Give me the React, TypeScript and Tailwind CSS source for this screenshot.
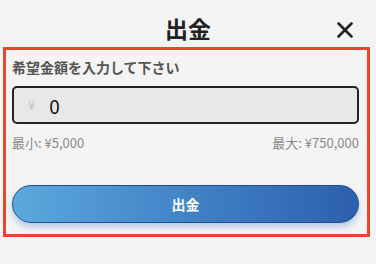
export default function App() {
  return (
    <main className="h-[264px] w-[376px] overflow-hidden bg-[#f4f4f4] font-['Noto_Sans_CJK_JP','Noto_Sans',sans-serif] text-[#222]">
      <header className="relative flex h-[47px] items-center justify-center pt-[9px]">
        <h1 className="text-[23px] font-bold leading-none">出金</h1>
        <button className="absolute right-[23px] top-[22px] text-[#222]">
          <svg width="16" height="16" viewBox="0 0 16 16" fill="none">
            <path d="M1.5 1.5L14.5 14.5M14.5 1.5L1.5 14.5" stroke="currentColor" strokeWidth="2.6" strokeLinecap="round" />
          </svg>
        </button>
      </header>

      <section className="ml-[3px] w-[367px] border-[3px] border-[#e8452f] pb-[11px] pl-[6px] pr-[8px] pt-[7px]">
        <p className="text-[14px] font-bold leading-[20px] text-[#555]">希望金額を入力して下さい</p>

        <div className="mt-[9px] flex h-[38px] items-center rounded-[5px] border-2 border-[#222] bg-[#e8e8e8] pl-[14px]">
          <span className="text-[13px] text-[#c4c4c4]">¥</span>
          <span className="ml-[14px] text-[19px] leading-none text-[#111]">0</span>
        </div>

        <div className="mt-[10px] flex justify-between text-[13px] leading-[18px] text-[#8a8a8a]">
          <span>最小: ¥5,000</span>
          <span>最大: ¥750,000</span>
        </div>

        <button className="mt-[33px] flex h-[38px] w-full items-center justify-center rounded-full border-[1.5px] border-[#234f8c] bg-gradient-to-r from-[#5ca8de] to-[#2c5fae] text-[14px] font-bold text-white shadow-[0_4px_6px_rgba(70,120,210,0.35)]">
          出金
        </button>
      </section>
    </main>
  );
}
